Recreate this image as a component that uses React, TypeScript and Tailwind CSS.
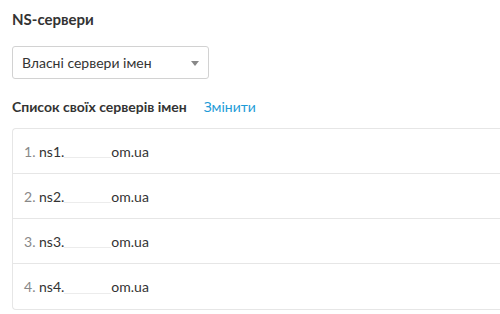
import React from 'react';

export default function App() {
  const servers = [1, 2, 3, 4];

  return (
    <div className="w-[500px] h-[314px] bg-white overflow-hidden font-['Lato',sans-serif] text-[#333]">
      <div className="pl-3 pt-[9px]">
        {/* Title */}
        <h2 className="text-[15px] font-bold leading-[20px] text-[#333]">NS-сервери</h2>

        {/* Select */}
        <div className="mt-[17px] w-[197px] h-[33px] border border-[#d2d2d2] rounded-[3px] flex items-center justify-between pl-[9px] pr-[8px]">
          <span className="text-[14px] text-[#333]">Власні сервери імен</span>
          <svg width="8" height="5" viewBox="0 0 8 5" className="mt-[1px] mr-[1px]">
            <path d="M0 0 L8 0 L4 5 Z" fill="#888" />
          </svg>
        </div>

        {/* Header row */}
        <div className="mt-[17px] flex items-center gap-[17px] h-[20px]">
          <span className="text-[14px] font-bold text-[#333]">Список своїх серверів імен</span>
          <span className="text-[14px] text-[#1e9bd7]">Змінити</span>
        </div>

        {/* List */}
        <div className="mt-[12px] border-l border-t border-b border-[#e6e6e6] rounded-l-[4px] w-[600px]">
          {servers.map((n, i) => (
            <div
              key={n}
              className={`h-[45px] flex items-center pl-[11px] text-[14px] ${i < servers.length - 1 ? 'border-b border-[#e6e6e6]' : ''}`}
            >
              <span className="text-[#888]">{n}.&nbsp;</span>
              <span>ns{n}.</span>
              <span className="inline-block w-[47px] h-[14px] border-b border-[#ececec]" />
              <span>om.ua</span>
            </div>
          ))}
        </div>
      </div>
    </div>
  );
}
